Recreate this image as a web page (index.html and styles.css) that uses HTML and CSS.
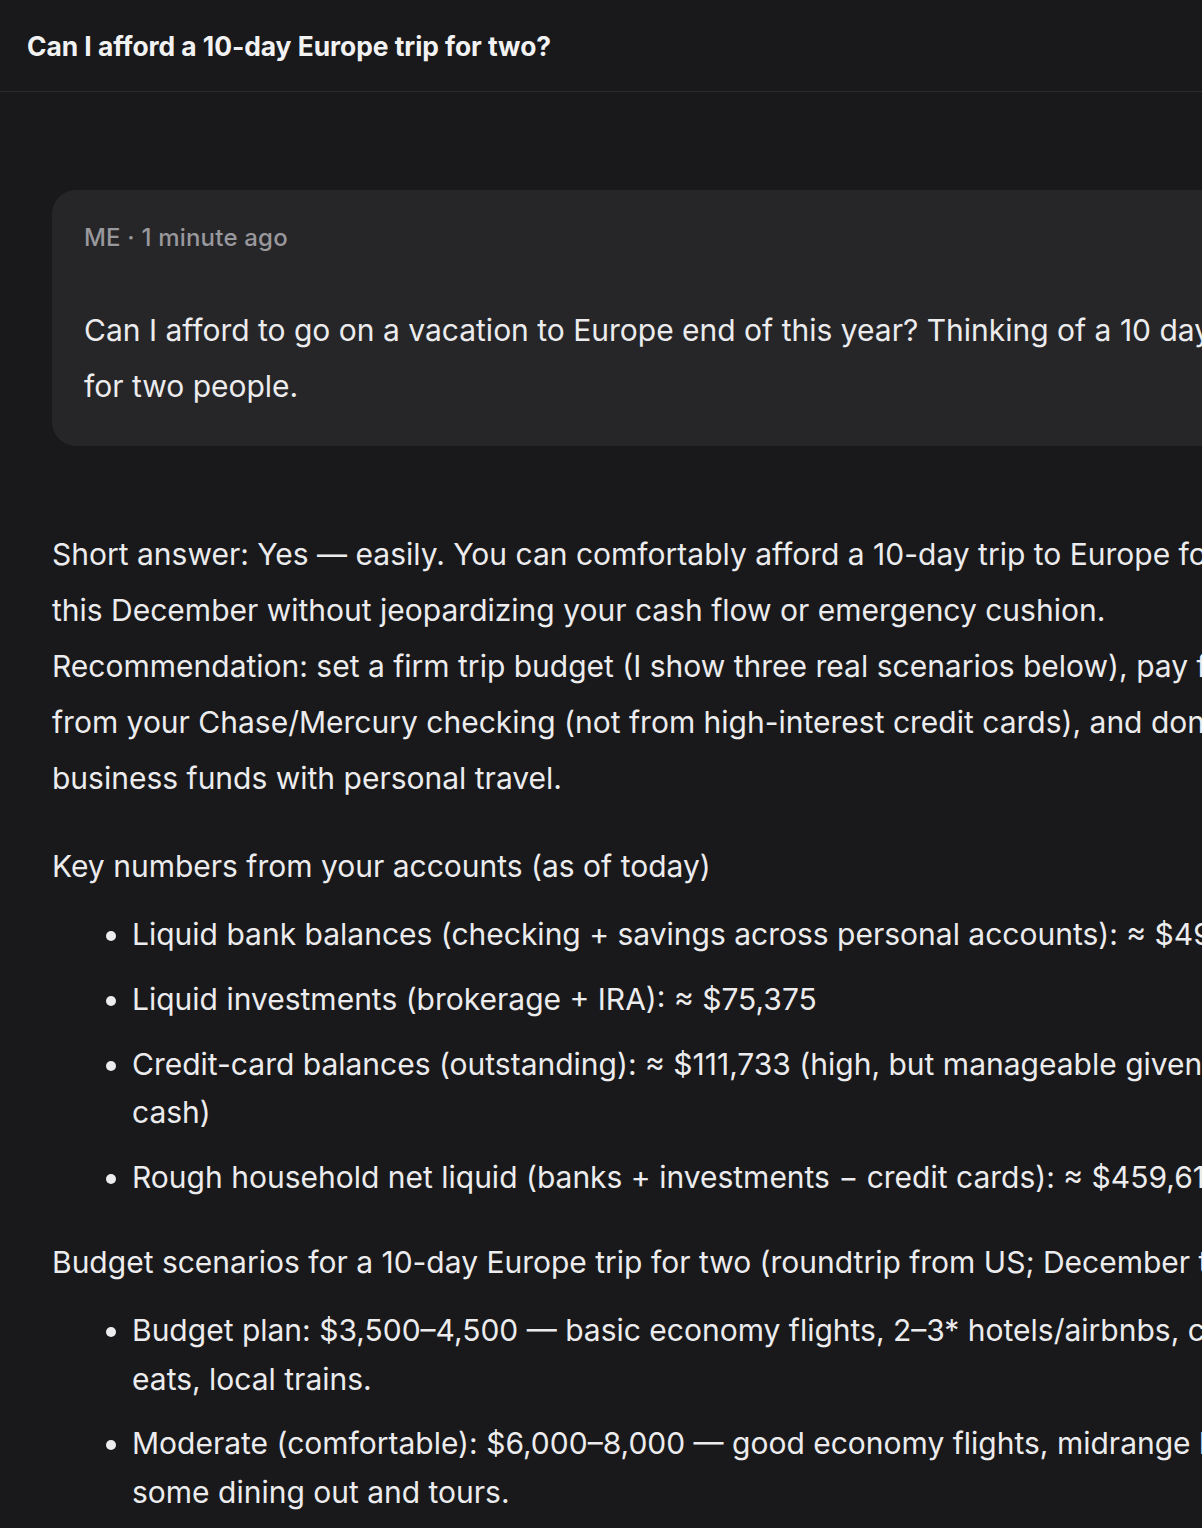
FILE: index.html
```html
<!DOCTYPE html>
<html lang="en">
<head>
<meta charset="utf-8">
<title>Can I afford a 10-day Europe trip for two?</title>
<link rel="stylesheet" href="styles.css">
</head>
<body>
<header class="topbar">
  <h1 class="topbar-title">Can I afford a 10-day Europe trip for two?</h1>
</header>
<main class="thread">
  <section class="user-msg">
    <div class="msg-meta">ME · 1 minute ago</div>
    <p class="msg-text">Can I afford to go on a vacation to Europe end of this year? Thinking of a 10 day trip for two people.</p>
  </section>
  <article class="answer">
    <p>Short answer: Yes — easily. You can comfortably afford a 10-day trip to Europe for two this December without jeopardizing your cash flow or emergency cushion.<br>Recommendation: set a firm trip budget (I show three real scenarios below), pay for it from your Chase/Mercury checking (not from high-interest credit cards), and don’t mix business funds with personal travel.</p>
    <p>Key numbers from your accounts (as of today)</p>
    <ul>
      <li>Liquid bank balances (checking + savings across personal accounts): ≈ $495,972</li>
      <li>Liquid investments (brokerage + IRA): ≈ $75,375</li>
      <li>Credit-card balances (outstanding): ≈ $111,733 (high, but manageable given your cash)</li>
      <li>Rough household net liquid (banks + investments − credit cards): ≈ $459,614</li>
    </ul>
    <p>Budget scenarios for a 10-day Europe trip for two (roundtrip from US; December travel)</p>
    <ul>
      <li>Budget plan: $3,500–4,500 — basic economy flights, 2–3* hotels/airbnbs, cheap eats, local trains.</li>
      <li>Moderate (comfortable): $6,000–8,000 — good economy flights, midrange hotels, some dining out and tours.</li>
    </ul>
  </article>
</main>
</body>
</html>
```

FILE: styles.css
```css
html, body {
  margin: 0;
  padding: 0;
  overflow: hidden;
  background: #19191b;
}
body {
  font-family: Inter, "Noto Sans", sans-serif;
  color: #ececee;
  -webkit-font-smoothing: antialiased;
}
.topbar {
  height: 91px;
  border-bottom: 1px solid #2b2b2e;
  padding-left: 27px;
  display: flex;
  align-items: center;
}
.topbar-title {
  margin: 0;
  font-size: 26.4px;
  font-weight: 700;
  letter-spacing: -0.05px;
  color: #f2f2f3;
}
.thread {
  width: 1265px;
  padding: 98px 0 0 52px;
}
.user-msg {
  background: #262628;
  border-radius: 24px;
  padding: 32px;
}
.msg-meta {
  font-size: 24px;
  font-weight: 500;
  line-height: 32px;
  letter-spacing: 0.2px;
  color: #98989d;
}
.msg-text {
  margin: 48px 0 0;
  font-size: 30px;
  line-height: 56px;
}
.answer {
  padding-top: 80px;
  font-size: 30px;
}
.answer p {
  margin: 32px 0 0;
  line-height: 56px;
}
.answer p:first-child {
  margin-top: 0;
}
.answer ul {
  margin: 16px 0 0;
  padding-left: 80px;
}
.answer li {
  line-height: 48.75px;
}
.answer li + li {
  margin-top: 16px;
}
```
